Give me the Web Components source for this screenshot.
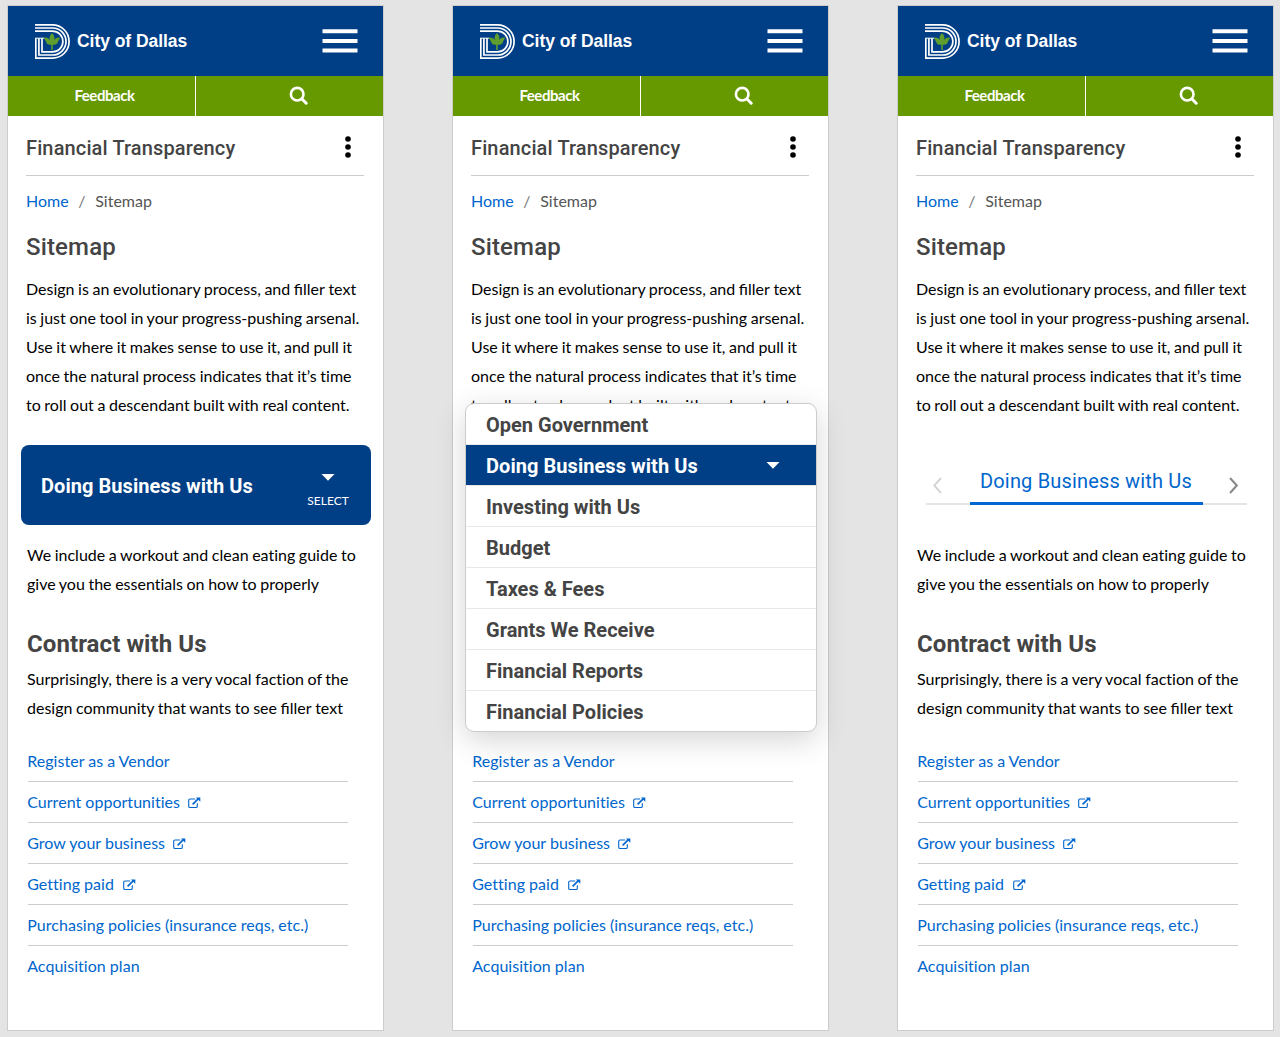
<!DOCTYPE html>
<html lang="en">
<head>
<meta charset="utf-8">
<title>City of Dallas – Financial Transparency</title>
<style>
html{height:100%;background:#e4e4e4}
body{margin:0;padding:5px 7px 0;font-family:Lato,sans-serif;font-size:16px;font-variant-ligatures:none;word-spacing:-.5px;color:#000;overflow:hidden}
main{display:flex;gap:68px}
</style>
</head>
<body>
<main>
<phone-screen>
  <select-box slot="nav">Doing Business with Us</select-box>
</phone-screen>
<phone-screen menu-open>
  <menu-list slot="nav">
    <menu-option>Open Government</menu-option>
    <menu-option selected>Doing Business with Us</menu-option>
    <menu-option>Investing with Us</menu-option>
    <menu-option>Budget</menu-option>
    <menu-option>Taxes &amp; Fees</menu-option>
    <menu-option>Grants We Receive</menu-option>
    <menu-option>Financial Reports</menu-option>
    <menu-option>Financial Policies</menu-option>
  </menu-list>
</phone-screen>
<phone-screen>
  <tab-slider slot="nav">Doing Business with Us</tab-slider>
</phone-screen>
</main>
<script>
const define = (name, html) => customElements.define(name, class extends HTMLElement {
  constructor() {
    super();
    const t = document.createElement('template');
    t.innerHTML = html;
    this.attachShadow({mode: 'open'}).append(t.content.cloneNode(true));
  }
});

define('city-header', `
<style>
:host{display:block;word-spacing:0}
.bar{display:flex;align-items:center;height:70px;padding:0 25px 0 27px;background:#003e86;color:#fff}
.logo{width:35px;height:35px;margin-right:7px}
b{flex:1;font:700 17.5px/20px "Liberation Sans",Arial,sans-serif;letter-spacing:-.05px;white-space:nowrap}
.tools{display:flex;height:40px;background:#690;color:#fff}
.tools div{flex:1;display:flex;align-items:center;justify-content:center;padding-bottom:2px;box-sizing:border-box}
.tools .fb{flex:none;width:188px;border-right:1px solid #fff;font-weight:700;font-size:15px;letter-spacing:-.45px;padding-left:6px}
.tools .s{padding:0 0 1px 17px}
svg{display:block}
</style>
<div class="bar">
  <svg class="logo" viewBox="0 0 35 35" fill="none" stroke="#fff" stroke-width="1.7">
    <path d="M0 .9H17.5A16.6 16.6 0 0 1 17.5 34.1H.8V14.2"/>
    <path d="M0 4H17.5A13.5 13.5 0 0 1 17.5 31H3.9V14.2"/>
    <path d="M0 7.1H17.5A10.4 10.4 0 0 1 17.5 27.9H7V14.2"/>
    <path d="M0 14.2H9.2" stroke-width="1"/>
    <path fill="#5f9e2e" stroke="none" d="M17 9C13.9 12 14 15 16 18.3C15.2 15 12.6 13.2 8.8 13.5C9.5 15 9.8 15.7 10.5 16.6C10.3 17 10.5 17.4 11 17.6C11.6 20.2 13.3 21.2 16.2 20.7V26H17.8V20.7C20.7 21.2 22.4 20.2 23 17.6C23.5 17.4 23.7 17 23.5 16.6C24.2 15.7 24.5 15 25.2 13.5C21.4 13.2 18.8 15 18 18.3C20 15 20.1 12 17 9Z"/>
  </svg>
  <b>City of Dallas</b>
  <svg width="36" height="24" viewBox="0 0 36 24" fill="#fff"><path d="M.5 .2h35v4h-35zM.5 10h35v4h-35zM.5 19.6h35v4h-35z"/></svg>
</div>
<div class="tools">
  <div class="fb">Feedback</div>
  <div class="s"><svg width="19" height="19" viewBox="0 0 19 19" fill="none" stroke="#fff"><circle cx="8.2" cy="8.2" r="6.3" stroke-width="2.6"/><path d="M13 13l4.2 4.2" stroke-width="3" stroke-linecap="round"/></svg></div>
</div>`);

define('section-title', `
<style>
:host{display:flex;align-items:center;justify-content:space-between;height:59px;margin:0 19px 0 18px;padding:0 12px 0 0;border-bottom:1px solid #ccc;word-spacing:0}
span{font:500 20px/24px Roboto,sans-serif;letter-spacing:.13px;color:#444;padding-top:4px;white-space:nowrap}
svg{display:block;margin-top:3px}
</style>
<span><slot></slot></span>
<svg width="8" height="22" viewBox="0 0 8 22"><circle cx="4" cy="3" r="2.8"/><circle cx="4" cy="11" r="2.8"/><circle cx="4" cy="19" r="2.8"/></svg>`);

define('bread-crumb', `
<style>
:host{display:flex;gap:9.7px;padding:13px 18px 1px;height:24px;line-height:24px;color:#555}
a{color:#0066cd} i{font-style:normal;color:#777}
</style><a>Home</a><i>/</i><span>Sitemap</span>`);

define('link-row', `
<style>
:host{display:flex;align-items:center;height:40px;border-bottom:1px solid #ccc;color:#0066cd;white-space:nowrap;word-spacing:-.1px;letter-spacing:.035px}
:host([last]){border-color:transparent}
span{margin:0 0 2px -.8px}
svg{display:none;margin:1px 0 0 8px}
:host([ext]) svg{display:block}
</style>
<span><slot></slot></span>
<svg width="13" height="12" viewBox="0 0 13 12" fill="none" stroke="currentColor"><path d="M7.2 2H2Q.7 2 .7 3.3V9.2Q.7 10.5 2 10.5H8Q9.3 10.5 9.3 9.2V6.3" stroke-width="1.1"/><path d="M4.6 7.4L10.4 1.6" stroke-width="1.6"/><path d="M7.9 .4H12.3V4.8Z" fill="currentColor" stroke="none"/></svg>`);

define('phone-screen', `
<style>
:host{display:block;flex:none;width:375px;height:1024px;background:#fff;border:1px solid #ccc;position:relative}
h1{margin:17px 18px 0;font:500 24px/32px Roboto,sans-serif;letter-spacing:.15px;color:#444}
p{margin:0 0 0 19px;line-height:29px;white-space:nowrap}
.lig{font-variant-ligatures:normal}
.intro{margin:11px 0 0 18px}
.nav{height:80px;margin:26px 12px 15px 13px}
h2{margin:30px 19px 0;font:700 24px/32px Roboto,sans-serif;letter-spacing:.08px;word-spacing:0;color:#444}
h2+p{margin-top:4px}
nav{margin:19px 35px 0 20px}
:host([menu-open]) .covered{visibility:hidden}
</style>
<city-header></city-header>
<section-title>Financial Transparency</section-title>
<bread-crumb></bread-crumb>
<h1>Sitemap</h1>
<p class="intro">Design is an evolutionary process, and <span class="lig">filler</span> text<br>is just one tool in your progress-pushing arsenal.<br>Use it where it makes sense to use it, and pull it<br>once the natural process indicates that it’s time<br>to roll out a descendant built with real content.</p>
<div class="nav"><slot name="nav"></slot></div>
<div class="covered">
<p>We include a workout and clean eating guide to<br>give you the essentials on how to properly</p>
<h2>Contract with Us</h2>
<p>Surprisingly, there is a very vocal faction of the<br>design community that wants to see <span class="lig">filler</span> text</p>
</div>
<nav>
<link-row>Register as a Vendor</link-row>
<link-row ext>Current opportunities</link-row>
<link-row ext>Grow your business</link-row>
<link-row ext>Getting paid&hairsp;</link-row>
<link-row>Purchasing policies (insurance reqs, etc.)</link-row>
<link-row last>Acquisition plan</link-row>
</nav>`);

define('select-box', `
<style>
:host{display:flex;align-items:center;justify-content:space-between;height:80px;box-sizing:border-box;padding:2px 22px 0 20px;border-radius:8px;background:#003e86;color:#fff;font:700 20px/24px Roboto,sans-serif;letter-spacing:.05px;word-spacing:0}
div{display:flex;flex-direction:column;align-items:center;gap:12px;padding-top:11px;font:12px/16px Lato,sans-serif}
svg{display:block}
</style>
<span><slot></slot></span>
<div><svg width="14" height="7" viewBox="0 0 14 7"><path d="M.5 0h13L7 6.8z" fill="#fff"/></svg><span>SELECT</span></div>`);

define('menu-list', `
<style>
:host{display:block;position:absolute;left:12px;top:397px;width:350px;border:1px solid #ccc;border-radius:9px;background:#fff;overflow:hidden;height:327px;box-shadow:0 8px 30px rgba(0,0,0,.17);word-spacing:0}
</style><slot></slot>`);

define('menu-option', `
<style>
:host{display:flex;align-items:center;justify-content:space-between;padding:2px 36px 0 20px;box-sizing:border-box;height:41px;border-bottom:1px solid #e8e8e8;font:700 20px/24px Roboto,sans-serif;color:#444}
:host([selected]){background:#003e86;background-clip:padding-box;color:#fff;letter-spacing:.05px}
svg{display:none}:host([selected]) svg{display:block;margin-bottom:2px}
</style><span><slot></slot></span><svg width="14" height="7" viewBox="0 0 14 7"><path d="M.5 0h13L7 6.8z" fill="#fff"/></svg>`);

define('tab-slider', `
<style>
:host{display:flex;justify-content:space-between;align-items:flex-end;height:60px;width:321px;margin-left:14.5px;box-sizing:border-box;background:linear-gradient(#e4e4e4,#e4e4e4) 0 58px/100% 2px no-repeat;word-spacing:0}
span{width:233px;height:38px;border-bottom:3px solid #0066d2;text-align:center;font:400 20px/28px Roboto,sans-serif;letter-spacing:.17px;color:#0066cd;white-space:nowrap;box-sizing:border-box}
svg{display:block;margin:0 8px 11px 7px}
svg:last-child{margin-right:9px;margin-left:6px}
</style>
<svg width="9" height="17" viewBox="0 0 9 17" fill="none" stroke="#d4d4d4" stroke-width="1.9"><path d="M8 1L1.2 8.5L8 16"/></svg>
<span><slot></slot></span>
<svg width="9" height="17" viewBox="0 0 9 17" fill="none" stroke="#888" stroke-width="2"><path d="M1 1L7.8 8.5L1 16"/></svg>`);
</script>
</body>
</html>
